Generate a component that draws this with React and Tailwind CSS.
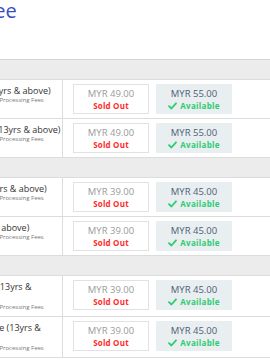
import React from "react";

const sections = [
  [
    { label: "Adult Pass (13yrs & above)", early: "49.00", normal: "55.00", one: true },
    { label: "Regular Pass (13yrs & above)", early: "49.00", normal: "55.00", one: true },
  ],
  [
    { label: "Adult Pax (13yrs & above)", early: "39.00", normal: "45.00", one: true },
    { label: "Adult (13yrs & above)", early: "39.00", normal: "45.00", one: true },
  ],
  [
    { label: "Weekend VIP (13yrs & above)", early: "39.00", normal: "45.00" },
    { label: "Weekday Triple (13yrs & above)", early: "39.00", normal: "45.00" },
  ],
];

function Check() {
  return (
    <svg width="9" height="8" viewBox="0 0 9 8" className="shrink-0">
      <path d="M1 4.2 L3.4 6.5 L8 1.3" fill="none" stroke="#2ecc71" strokeWidth="1.8" strokeLinecap="round" strokeLinejoin="round" />
    </svg>
  );
}

function Row({ row }) {
  return (
    <div className="flex border-b border-[#dcdcdc]">
      <div className="w-[133px] shrink-0 border-r border-[#dcdcdc] pl-[10px] pr-[1px] pt-[5px] pb-[4px]">
        <div className={row.one ? "whitespace-nowrap text-[9px] leading-[11px] text-[#333]" : "text-[9px] leading-[11px] text-[#333]"}>
          {row.label}
        </div>
        <div className="text-[6px] leading-[9px] text-[#777] whitespace-nowrap">Ticket price excludes Processing Fees</div>
      </div>
      <div className="flex gap-[7px] pl-[10px] pt-[4px] pb-[4px]">
        <div className="w-[76px] h-[30px] border border-[#e2e2e2] bg-white flex flex-col items-center pt-[3px]">
          <div className="text-[9.5px] leading-[12px] text-[#9a9a9a]">MYR {row.early}</div>
          <div className="text-[8px] leading-[12px] font-bold text-[#ff2b2b] tracking-[0.2px]">Sold Out</div>
        </div>
        <div className="w-[76px] h-[30px] bg-[#e9eef0] flex flex-col items-center pt-[4px]">
          <div className="text-[9.5px] leading-[12px] text-[#4d5f77]">MYR {row.normal}</div>
          <div className="flex items-center gap-[3px] text-[8px] leading-[12px] font-bold text-[#2ecc71] tracking-[0.3px]">
            <Check />
            <span>Available</span>
          </div>
        </div>
      </div>
    </div>
  );
}

export default function App() {
  return (
    <div
      className="w-[270px] h-[360px] overflow-hidden bg-white"
      style={{ fontFamily: '"Open Sans", "Liberation Sans", sans-serif' }}
    >
      <div className="-ml-[16px] h-[59px] whitespace-nowrap text-[20px] leading-[22px] text-[#3b4cc0]">
        Fee
      </div>
      <div className="-ml-[70px] w-[340px] border-t border-[#d4d4d4]">
        {sections.map((sec, i) => (
          <div key={i}>
            <div className="h-[20px] bg-[#ececec] border-b border-[#dcdcdc]" />
            {sec.map((row, j) => (
              <Row key={j} row={row} />
            ))}
          </div>
        ))}
      </div>
    </div>
  );
}
